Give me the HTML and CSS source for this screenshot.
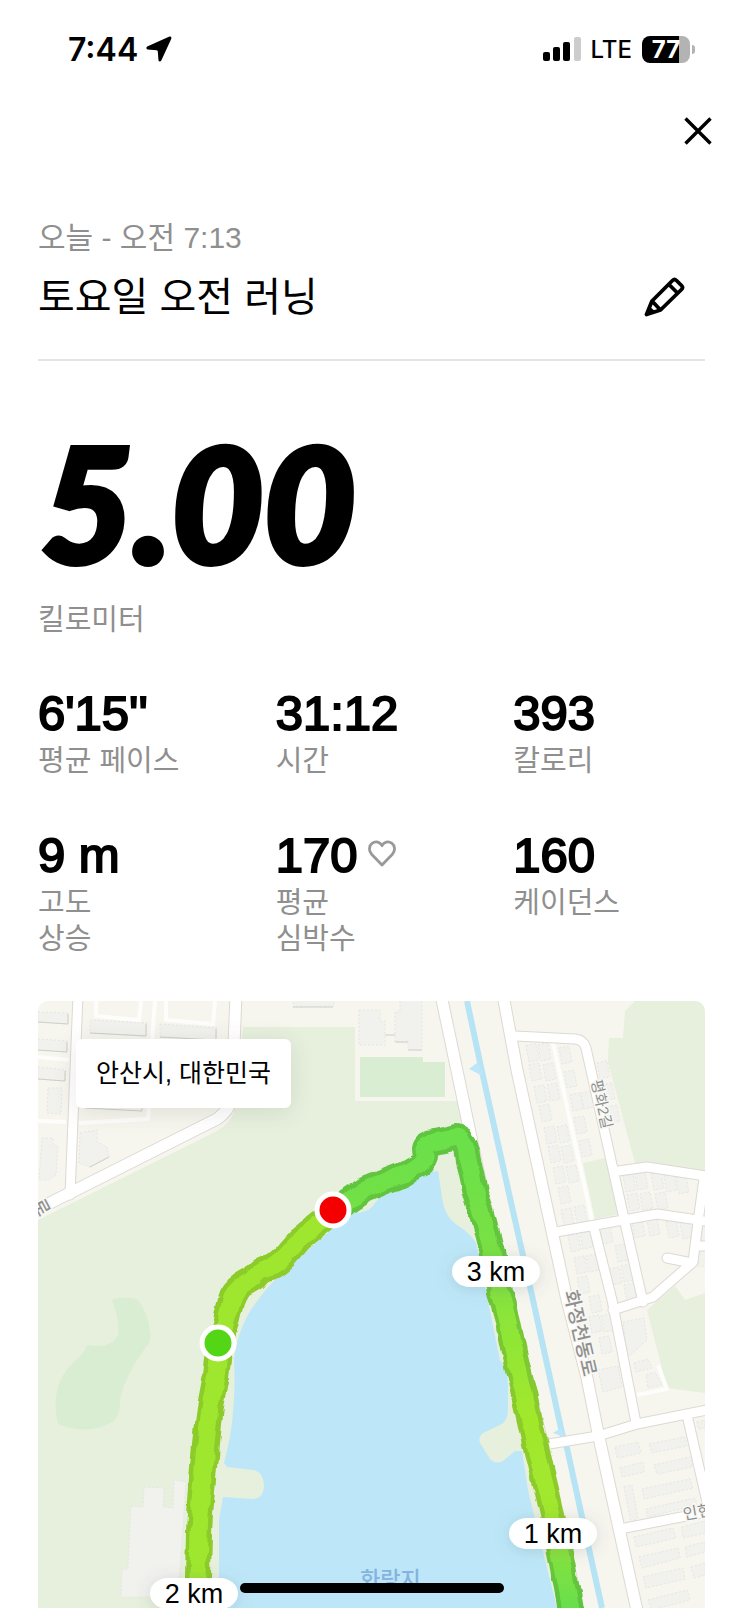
FILE: index.html
```html
<!DOCTYPE html>
<html lang="ko">
<head>
<meta charset="utf-8">
<meta name="viewport" content="width=device-width, initial-scale=1">
<title>토요일 오전 러닝</title>
<link rel="stylesheet" href="styles.css">
</head>
<body>
<div class="app">
  <div class="status">
    <div class="status-side">
      <span class="clock">7:44</span>
      <svg class="locate" width="26" height="26" viewBox="0 0 26 26" aria-hidden="true"><path d="M23.500.600 1.200 10.500Q-.6 12.200 1.400 13.600L10.800 14.300Q11.700 14.500 11.800 15.400L12.500 24.500Q13.700 26.400 15.300 24.500L25.300 2.700Q25.800.2 23.500.600Z"/></svg>
    </div>
    <div class="status-side status-right">
      <svg width="38" height="26" viewBox="0 0 38 26" aria-hidden="true"><rect y="16" width="7" height="9" rx="2"/><rect x="10" y="11" width="7" height="14" rx="2"/><rect x="20" y="6" width="7" height="19" rx="2"/><rect x="31" y="1" width="7" height="24" rx="2" fill="#ccc"/></svg>
      <span class="network">LTE</span>
      <div class="battery"><span class="battery-level">77</span></div>
    </div>
  </div>

  <div class="toolbar">
    <button class="icon-button" type="button" aria-label="닫기">
      <svg width="30" height="30" viewBox="0 0 30 30" fill="none" stroke="#000" stroke-width="3.400"><path d="M2.500 2.500l25 25M27.500 2.500l-25 25"/></svg>
    </button>
  </div>

  <main class="content">
    <header class="run-head">
      <p class="run-date">오늘 - 오전 7:13</p>
      <div class="run-title-row">
        <h1 class="run-title">토요일 오전 러닝</h1>
        <button class="icon-button" type="button" aria-label="이름 편집">
          <svg width="42" height="42" viewBox="0 0 42 42" fill="none" stroke="#000" stroke-width="3.800" stroke-linejoin="round"><path d="M3.500 38.500 9 25 29.500 4.500Q31.500 2.500 33.500 4.500L38.500 9.500Q40.500 11.500 38.500 13.500L17.500 34ZM26 8.500 34.500 17M9 25 17.500 34M6 32.500 10.500 36.500"/></svg>
        </button>
      </div>
    </header>

    <section class="distance">
      <p class="distance-value">5.00</p>
      <p class="label">킬로미터</p>
    </section>

    <dl class="stats">
      <div class="stat"><dd class="value">6'15''</dd><dt class="label">평균 페이스</dt></div>
      <div class="stat"><dd class="value">31:12</dd><dt class="label">시간</dt></div>
      <div class="stat"><dd class="value">393</dd><dt class="label">칼로리</dt></div>
      <div class="stat"><dd class="value">9 m</dd><dt class="label">고도<br>상승</dt></div>
      <div class="stat"><dd class="value">170 <svg class="heart" width="28" height="28" viewBox="0 0 28 28" fill="none" stroke="#999" stroke-width="2.800" stroke-linejoin="round" aria-hidden="true"><path d="M14 26 3.800 15.500C.3 11.700 1 6.500 4.300 4.200 8 1.700 12 3 14 6.700 16 3 20 1.700 23.700 4.200 27 6.500 27.700 11.700 24.200 15.500Z"/></svg></dd><dt class="label">평균<br>심박수</dt></div>
      <div class="stat"><dd class="value">160</dd><dt class="label">케이던스</dt></div>
    </dl>

    <section class="map" aria-label="러닝 경로 지도">
      <svg class="map-canvas" viewBox="38 1001 667 607" preserveAspectRatio="xMidYMin slice">
        <defs>
          <linearGradient id="pace" gradientUnits="userSpaceOnUse" x1="0" y1="1138" x2="0" y2="1608">
            <stop offset="0" stop-color="#6be04a"/><stop offset=".25" stop-color="#79e143"/><stop offset=".42" stop-color="#90e636"/><stop offset=".6" stop-color="#a2e82c"/><stop offset=".82" stop-color="#a0e82e"/><stop offset=".91" stop-color="#7ee142"/><stop offset="1" stop-color="#68df4c"/>
          </linearGradient>
          <linearGradient id="pace-edge" gradientUnits="userSpaceOnUse" x1="0" y1="1138" x2="0" y2="1608">
            <stop offset="0" stop-color="#5fc440"/><stop offset=".25" stop-color="#64c53c"/><stop offset=".42" stop-color="#78c734"/><stop offset=".6" stop-color="#8ccb2c"/><stop offset=".82" stop-color="#8ccb2c"/><stop offset=".91" stop-color="#68c63a"/><stop offset="1" stop-color="#5bc342"/>
          </linearGradient>
          <filter id="wobble" filterUnits="userSpaceOnUse" x="38" y="1001" width="667" height="607"><feTurbulence type="fractalNoise" baseFrequency=".06" numOctaves="1" seed="4"/><feDisplacementMap in="SourceGraphic" scale="9" xChannelSelector="R" yChannelSelector="G"/></filter>
          <filter id="soft" x="-40%" y="-80%" width="180%" height="260%"><feDropShadow dx="0" dy="2" stdDeviation="8" flood-color="#567" flood-opacity=".2"/></filter>
          <marker id="house" markerUnits="userSpaceOnUse" markerWidth="16" markerHeight="22" viewBox="-8 -11 16 22"><path class="building" d="M-6-7 4-9 7 7-3 9Z"/></marker>
          <path id="route-west" d="M198 1620 198 1577 199 1533 200 1513 203 1480 206 1443 210 1407 216 1375 220 1345 225 1325 231 1300Q233 1292 242 1286L254 1279Q259 1270 270 1268 277 1265 285 1256L299 1240 315 1227 335 1211"/>
          <path id="route-east" d="M335 1211 349 1200 365 1189 387 1180 405 1173 419 1165Q426 1160 425 1153 421 1143 434 1142L457 1137Q466 1140 467 1154L469 1165 475 1192 484 1222 492 1252 500 1292 504 1304 514 1352 525 1399 537 1452 549 1502 560 1552 571 1610 573 1620"/>
        </defs>
        <rect class="land" x="38" y="1001" width="667" height="607"/>
        <path class="park" d="M38 1220 217 1131Q230 1124 234 1112L243 1027H355V1101H462L580 1608H38Z"/>
        <path class="park" d="M635 1001H705V1171L635 1163 608 1062 609 1038H623L625 1011ZM583 1163 605 1158 619 1214 595 1219ZM647 1310 675 1286 685 1300 705 1293V1393L667 1388Z"/>
        <path class="lawn" d="M360 1057H423V1062H445V1097H360ZM112 1300Q120 1320 118 1335 111 1349 87 1345 84 1355 74 1362 49 1385 58 1424 88 1436 112 1422 121 1416 120 1400 124 1377 146 1347 152 1341 150 1331 148 1312 137 1299 122 1296 112 1300Z"/>
        <path class="water" d="M413 1180Q425 1171 438 1171L442 1197Q444 1216 457 1225 471 1234 476 1243L500 1360Q508 1370 508 1385V1409Q508 1421 500 1425L483 1433Q478 1437 480 1443L490 1459Q496 1465 503 1461L515 1451H522L528 1490 540 1540 557 1608H219V1520L223 1497 253 1499Q264 1498 264 1485 263 1471 253 1470L227 1467 224 1463 230 1437Q236 1400 234 1360 238 1325 258 1300 272 1280 300 1257L333 1228 352 1213Q370 1213 375 1203 384 1191 403 1189Z"/>

        <path class="building" d="M38 1012 68 1013V1024L38 1022ZM38 1039 67 1041V1052L38 1050ZM38 1067 66 1070 65 1081 38 1079ZM48 1088H62L61 1114 47 1113ZM90 1020 147 1023 146 1036 90 1033ZM160 1024 217 1028 216 1040 160 1037ZM80 1133 97 1130V1142L107 1147 109 1157 90 1167 79 1163ZM42 1138H53V1145L58 1146 56 1175 48 1180H39ZM359 1010H380V1021H385V1045H359ZM400 995H422V1050H408V1042H395V1012H400ZM293 995H334V1006L293 1007ZM131 1506 143 1507 144 1487 164 1488 163 1507 173 1508 174 1480 186 1482 178 1597H121L122 1570 128 1569Z"/>
        <path class="shade" d="M38 1022 68 1024V1014M38 1050 67 1052V1042M38 1079 65 1081V1071M90 1033 146 1036V1024M160 1037 216 1040V1029M85 1108 142 1111V1105M293 1007H333M385 1035H395M395 1042H408M408 1050H422M90 1167 109 1157"/>
        <path class="building" d="M623 1322 644 1318 647 1340 628 1357ZM634 1363 648 1359 652 1368 636 1372ZM646 1375 655 1372 662 1385 648 1388ZM598 1370 618 1366 622 1387 603 1392ZM615 1447 638 1442 641 1453 617 1458ZM649 1444 685 1437 687 1446 652 1453ZM620 1468 643 1462 644 1472 622 1477ZM654 1465 690 1457 692 1467 657 1474ZM642 1489 690 1479 693 1488 644 1499ZM646 1509 695 1498 697 1505 648 1517ZM624 1487 632 1485 638 1518 631 1522ZM634 1537 673 1528 676 1538 636 1547ZM682 1527 705 1521V1533L683 1538ZM639 1557 678 1548 680 1558 642 1568ZM685 1547 705 1542V1552L687 1557ZM643 1577 683 1568 685 1579 646 1588ZM691 1567 705 1563V1575L694 1578ZM648 1600 687 1590 690 1600 652 1610ZM697 1422 705 1420V1428L699 1429Z"/>
        <polyline class="houses" points="532,1053 544,1052 565,1055 535,1072 549,1072 570,1079 540,1094 553,1092 576,1102 587,1100 603,1070 608,1092 613,1114 545,1113 580,1125 550,1135 563,1134 585,1148 554,1154 567,1154 559,1175 572,1174 564,1195 567,1217 580,1214 629,1183 641,1181 657,1181 670,1183 682,1185 633,1202 646,1201 661,1201 638,1229 653,1227 672,1229 686,1230 574,1243 586,1240 606,1235 580,1265 592,1263 621,1253 615,1276 627,1273 583,1285 630,1292 595,1304 605,1345 595,1324 607,1323 702,1235 702,1258"/>

        <path class="lane" d="M96 1001V1016L139 1020 141 1001M166 1001V1020L213 1024 215 1001M38 1057 69 1060M38 1121 66 1122M79 1123 148 1119 149 1107M155 1001 152 1040M553 1043 592 1220M637 1395 667 1389 658 1365"/>
        <path class="stream" d="M467 1001 481 1067 510 1198 533 1300 562 1433 567 1448 587 1540 602 1608"/>
        <path class="water" d="M469 1069 478 1062 483 1076ZM553 1433 561 1428 564 1437Z"/>
        <g class="road-edge">
          <path class="wide" d="M441 995 468 1123 496 1257 541 1438 579 1615M503 995 517 1070 567 1300 587 1378 598 1433 638 1615M236 995 232 1095Q231 1109 217 1119L38 1209"/>
          <path d="M78 995 70 1195M515 1036 575 1039Q584 1040 586 1048L625 1223 643 1302M594 1228 612 1300 636 1423M556 1232 657 1214 712 1222M618 1171 647 1167 712 1177M704 1178 698 1222 693 1262 653 1297 613 1310M667 1258 692 1263M698 1246H712M543 1445 598 1436 637 1424 712 1409M625 1528 712 1511M687 1415 707 1502"/>
        </g>
        <g class="road">
          <path class="wide" d="M441 995 468 1123 496 1257 541 1438 579 1615M503 995 517 1070 567 1300 587 1378 598 1433 638 1615M236 995 232 1095Q231 1109 217 1119L38 1209"/>
          <path d="M78 995 70 1195M515 1036 575 1039Q584 1040 586 1048L625 1223 643 1302M594 1228 612 1300 636 1423M556 1232 657 1214 712 1222M618 1171 647 1167 712 1177M704 1178 698 1222 693 1262 653 1297 613 1310M667 1258 692 1263M698 1246H712M543 1445 598 1436 637 1424 712 1409M625 1528 712 1511M687 1415 707 1502"/>
        </g>

        <g class="place">
          <text x="0" y="0" font-size="15" transform="translate(591 1081) rotate(77)">평화2길</text>
          <text class="place-strong" x="0" y="0" font-size="19" transform="translate(564 1292) rotate(77)">화정천동로</text>
          <text x="0" y="0" font-size="16" transform="translate(684 1520) rotate(-10)">인현</text>
          <text class="place-strong" x="0" y="0" font-size="18" transform="translate(32 1203) rotate(62)">로</text>
          <text class="place-water" x="360" y="1587" font-size="22">화랑지</text>
        </g>

        <g class="route" filter="url(#wobble)">
          <use href="#route-west" stroke="#8ccb2c" stroke-width="26"/>
          <use href="#route-east" stroke="url(#pace-edge)" stroke-width="26"/>
          <use href="#route-west" stroke="#9fe72e" stroke-width="17"/>
          <use href="#route-east" stroke="url(#pace)" stroke-width="17"/>
        </g>
        <g stroke="#fff" stroke-width="5">
          <circle cx="333" cy="1210" r="16" fill="#f40000"/>
          <circle cx="218" cy="1343" r="16" fill="#52d616"/>
        </g>
        <g class="distance-pins">
          <g filter="url(#soft)"><rect x="452" y="1256" width="88" height="31" rx="18" ry="16"/><rect x="509" y="1518" width="88" height="31" rx="18" ry="16"/><rect x="150" y="1578" width="88" height="31" rx="18" ry="16"/></g>
          <text x="496" y="1281">3 km</text>
          <text x="553" y="1543">1 km</text>
          <text x="194" y="1603">2 km</text>
        </g>
      </svg>
      <p class="map-place">안산시, 대한민국</p>
    </section>
  </main>
  <div class="home-bar"></div>
</div>
</body>
</html>
```
FILE: styles.css
```css
* { box-sizing: border-box; }

body {
  margin: 0;
  background: #fff;
  color: #000;
  font-family: "Liberation Sans", "Noto Sans CJK KR", sans-serif;
}

p, h1, dl, dd { margin: 0; }

.app {
  position: relative;
  display: flex;
  flex-direction: column;
  min-height: 100vh;
  overflow: hidden;
}

.status {
  display: flex;
  justify-content: space-between;
  align-items: center;
  height: 98px;
  padding: 0 48px 0 68px;
  font-family: Inter, sans-serif;
}

.status-side {
  display: flex;
  align-items: center;
  gap: 8px;
}

.status-right { gap: 10px; }

.clock { font-size: 32px; font-weight: 600; }

.network { font-size: 24px; font-weight: 500; }

.battery {
  position: relative;
  width: 48px;
  height: 27px;
  margin-right: 5px;
  border-radius: 8px;
  background: linear-gradient(90deg, #000 37px, #b3b3b3 37px);
}

.battery::after {
  content: "";
  position: absolute;
  left: 50px;
  top: 9px;
  width: 3px;
  height: 9px;
  border-radius: 0 4px 4px 0;
  background: #b3b3b3;
}

.battery-level {
  display: block;
  color: #fff;
  font-size: 24px;
  font-weight: 700;
  line-height: 27px;
  text-align: center;
}

.toolbar {
  display: flex;
  justify-content: flex-end;
  align-items: center;
  height: 66px;
  padding-right: 30px;
}

.icon-button {
  display: flex;
  padding: 0;
  border: 0;
  background: none;
}

.content {
  flex: 1;
  display: flex;
  flex-direction: column;
  padding: 54px 38px 0;
}

.run-head {
  padding-bottom: 23px;
  border-bottom: 2px solid #e5e5e5;
}

.run-date {
  color: #8f8f8f;
  font-size: 30px;
  line-height: 40px;
}

.run-title-row {
  display: flex;
  justify-content: space-between;
  align-items: center;
  height: 78px;
  padding-right: 20px;
}

.run-title {
  font-size: 40px;
  font-weight: 400;
  line-height: 56px;
}

.distance { margin-top: 61px; }

.distance-value {
  margin-bottom: 20px;
  padding-left: 3px;
  font-family: Lato, sans-serif;
  font-size: 159px;
  font-style: italic;
  font-weight: 900;
  line-height: 160px;
  -webkit-text-stroke: 6px #000;
}

.label {
  color: #8f8f8f;
  font-size: 29px;
  line-height: 36px;
}

.stats {
  display: grid;
  grid-template-columns: repeat(3, 1fr);
  gap: 48px 46px;
  margin: 47px 0 44px;
}

.stat {
  display: flex;
  flex-direction: column;
  gap: 2px;
}

.value {
  display: flex;
  align-items: center;
  gap: 11px;
  font-size: 49px;
  line-height: 56px;
  white-space: nowrap;
  -webkit-text-stroke: 2px #000;
}

.heart { margin-bottom: 4px; }

.map {
  position: relative;
  flex: 1;
  min-height: 420px;
  border-radius: 10px 10px 0 0;
  overflow: hidden;
}

.map-canvas {
  position: absolute;
  inset: 0;
  width: 100%;
  height: 100%;
}

.map-place {
  position: absolute;
  left: 38px;
  top: 38px;
  padding: 0 20px;
  border-radius: 6px;
  background: #fff;
  box-shadow: 0 4px 24px rgba(60, 70, 60, 0.12);
  font-size: 25px;
  line-height: 69px;
}

.land { fill: #f6f5ee; }
.park { fill: #e7efdd; }
.lawn { fill: #d8edd1; }
.water { fill: #bde7f8; }
.stream { fill: none; stroke: #b6e4f5; stroke-width: 6px; }
.building { fill: #f1f1ee; stroke: #e6e6e2; stroke-width: 1px; stroke-dasharray: 2 2; }
.shade { fill: none; stroke: #cfcfca; stroke-width: 1px; }
.houses { fill: none; marker: url(#house); }
.lane { fill: none; stroke: #fdfdfc; stroke-width: 4px; }
.road, .road-edge { fill: none; stroke-linejoin: round; stroke-linecap: round; }
.road { stroke: #fff; stroke-width: 9px; }
.road .wide { stroke-width: 11px; }
.road-edge { stroke: #ddd9d3; stroke-width: 11px; }
.road-edge .wide { stroke-width: 13px; }

.route { fill: none; stroke-linejoin: round; }

.place { fill: #8f8f8f; stroke: #f8f8f4; stroke-width: 3px; paint-order: stroke; }
.place-strong { font-weight: 500; }
.place-water { fill: #86b3dd; stroke: none; font-weight: 500; }

.distance-pins { fill: #fff; }
.distance-pins text { fill: #000; font-size: 27px; text-anchor: middle; }

.home-bar {
  position: absolute;
  left: 50%;
  bottom: 15px;
  width: 264px;
  height: 10px;
  margin-left: -132px;
  border-radius: 5px;
  background: #000;
}
```
